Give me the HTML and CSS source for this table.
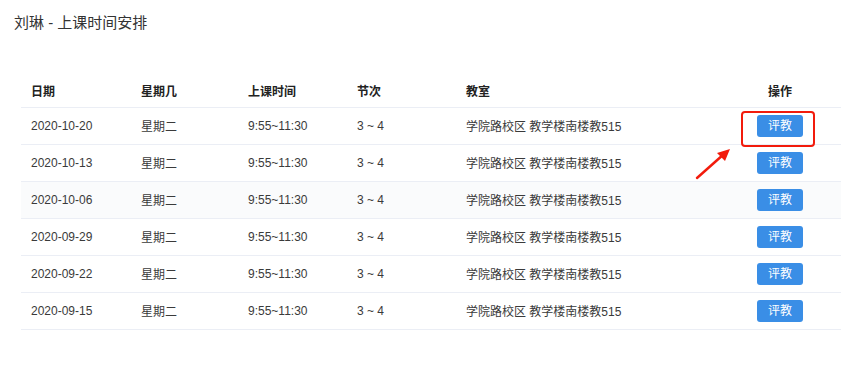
FILE: index.html
```html
<!DOCTYPE html>
<html lang="zh-CN">
<head>
<meta charset="utf-8">
<link rel="stylesheet" href="styles.css">
</head>
<body>
<div class="page">
  <h1 class="title">刘琳 - 上课时间安排</h1>
  <div class="table-wrap">
    <table class="schedule">
      <colgroup>
        <col class="c-date"><col class="c-week"><col class="c-time"><col class="c-sec"><col class="c-room"><col class="c-op">
      </colgroup>
      <thead>
        <tr><th>日期</th><th>星期几</th><th>上课时间</th><th>节次</th><th>教室</th><th class="op">操作</th></tr>
      </thead>
      <tbody>
        <tr><td>2020-10-20</td><td>星期二</td><td>9:55~11:30</td><td>3 ~ 4</td><td>学院路校区 教学楼南楼教515</td><td class="op"><button class="btn">评教</button></td></tr>
        <tr><td>2020-10-13</td><td>星期二</td><td>9:55~11:30</td><td>3 ~ 4</td><td>学院路校区 教学楼南楼教515</td><td class="op"><button class="btn">评教</button></td></tr>
        <tr class="hover"><td>2020-10-06</td><td>星期二</td><td>9:55~11:30</td><td>3 ~ 4</td><td>学院路校区 教学楼南楼教515</td><td class="op"><button class="btn">评教</button></td></tr>
        <tr><td>2020-09-29</td><td>星期二</td><td>9:55~11:30</td><td>3 ~ 4</td><td>学院路校区 教学楼南楼教515</td><td class="op"><button class="btn">评教</button></td></tr>
        <tr><td>2020-09-22</td><td>星期二</td><td>9:55~11:30</td><td>3 ~ 4</td><td>学院路校区 教学楼南楼教515</td><td class="op"><button class="btn">评教</button></td></tr>
        <tr><td>2020-09-15</td><td>星期二</td><td>9:55~11:30</td><td>3 ~ 4</td><td>学院路校区 教学楼南楼教515</td><td class="op"><button class="btn">评教</button></td></tr>
      </tbody>
    </table>
    <div class="highlight"></div>
    <svg class="arrow" width="40" height="36" viewBox="0 0 40 36">
      <line x1="3" y1="32" x2="30" y2="8" stroke="#f21b0c" stroke-width="2.4" stroke-linecap="round"/>
      <polygon points="36,3 23,7 31,15" fill="#f21b0c"/>
    </svg>
  </div>
</div>
</body>
</html>
```
FILE: styles.css
```css
* { box-sizing: border-box; }
html, body { margin: 0; padding: 0; background: #fff; }
body {
  font-family: "Liberation Sans", "Noto Sans CJK SC", sans-serif;
  color: #333;
}
.page { width: 841px; height: 387px; overflow: hidden; }
.title {
  margin: 0;
  padding: 14px 0 0 14px;
  height: 71px;
  font-size: 15px;
  font-weight: normal;
  color: #333;
  line-height: 18px;
}
.table-wrap {
  position: relative;
  margin-left: 21px;
  width: 820px;
}
.schedule {
  width: 820px;
  border-collapse: collapse;
  table-layout: fixed;
  font-size: 12px;
}
.c-date { width: 110px; }
.c-week { width: 107px; }
.c-time { width: 109px; }
.c-sec { width: 109px; }
.c-room { width: 263px; }
.c-op { width: 122px; }
.schedule th, .schedule td {
  height: 37px;
  padding: 0 10px;
  text-align: left;
  border-bottom: 1px solid #ebeef5;
  vertical-align: middle;
  white-space: nowrap;
}
.schedule th {
  font-weight: bold;
  color: #222;
  height: 36px;
  padding-top: 4px;
}
.schedule td { color: #3a3a3a; }
.schedule .op { text-align: center; padding-left: 0; padding-right: 0; }
.schedule th.op { padding-left: 0; padding-right: 0; }
.schedule tr.hover td { background: #fafbfc; }
.btn {
  width: 46px;
  height: 22px;
  border: none;
  border-radius: 3px;
  background: #3a8ee6;
  color: #fff;
  font-family: "Liberation Sans", "Noto Sans CJK SC", sans-serif;
  font-size: 12px;
  padding: 0;
  line-height: 22px;
  cursor: pointer;
}
.highlight {
  position: absolute;
  left: 720px;
  top: 40px;
  width: 74px;
  height: 36px;
  border: 2px solid #f21b0c;
  border-radius: 4px;
}
.arrow {
  position: absolute;
  left: 673px;
  top: 75px;
}
```
